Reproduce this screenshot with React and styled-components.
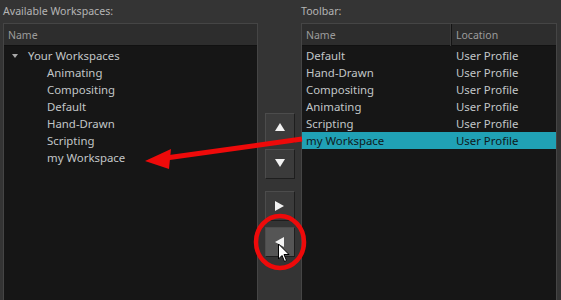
import React from "react";
import styled, { createGlobalStyle } from "styled-components";

const Global = createGlobalStyle`
  html, body { margin: 0; padding: 0; height: 300px; overflow: hidden; background: #343434; }
  #root { height: 300px; }
  * { box-sizing: border-box; }
`;

const Page = styled.div`
  position: relative;
  height: 300px;
  display: flex;
  padding-left: 3px;
  font-family: "Noto Sans", "DejaVu Sans", sans-serif;
  font-size: 11.4px;
`;

const Column = styled.div`
  display: flex;
  flex-direction: column;
  width: ${(p) => p.$w}px;
  height: 100%;
`;

const Label = styled.div`
  height: 23px;
  line-height: 22px;
  font-size: 10.6px;
  color: #b4b4b4;
  white-space: nowrap;
`;

const Panel = styled.div`
  flex: 1;
  background: #161616;
  border: 1px solid #454545;
  border-bottom: none;
  display: flex;
  flex-direction: column;
`;

const Header = styled.div`
  display: grid;
  grid-template-columns: ${(p) => p.$cols};
  height: 22px;
  background: #2d2d2d;
  border-bottom: 1px solid #111;
`;

const HeaderCell = styled.div`
  padding-left: 4px;
  line-height: 22px;
  font-size: 10.5px;
  color: #9c9c9c;
  border-right: ${(p) => (p.$sep ? "1px solid #141414" : "none")};
  box-shadow: ${(p) => (p.$sep ? "inset -1px 0 0 #3a3a3a" : "none")};
`;

const List = styled.div`
  padding-top: 1px;
  display: flex;
  flex-direction: column;
`;

const Row = styled.div`
  display: grid;
  grid-template-columns: ${(p) => p.$cols || "1fr"};
  height: 17px;
  line-height: 17px;
  color: ${(p) => (p.$sel ? "#0f1a1c" : "#c2c6c8")};
  background: ${(p) => (p.$sel ? "#20a1b5" : "transparent")};
  white-space: nowrap;
`;

const Cell = styled.div`
  padding-left: ${(p) => p.$indent || 4}px;
  display: flex;
  align-items: center;
  gap: 10px;
`;

const Caret = styled.span`
  width: 0;
  height: 0;
  border-left: 3.5px solid transparent;
  border-right: 3.5px solid transparent;
  border-top: 4px solid #a8a8a8;
  margin-left: 4px;
`;

const Middle = styled.div`
  width: 43px;
  display: flex;
  flex-direction: column;
  align-items: center;
  padding-top: 113px;
`;

const ArrowButton = styled.div`
  width: 30px;
  height: 30px;
  margin-bottom: ${(p) => p.$mb}px;
  background: ${(p) => (p.$hover ? "#555555" : "#3b3b3b")};
  border-top: 1px solid #4c4c4c;
  border-left: 1px solid #4c4c4c;
  border-right: 1px solid #1e1e1e;
  border-bottom: 1px solid #1e1e1e;
  display: flex;
  align-items: center;
  justify-content: center;
`;

const Tri = ({ dir }) => {
  const pts = {
    up: "0,8 5,0 10,8",
    down: "0,0 10,0 5,8",
    right: "0,0 9,5 0,10",
    left: "9,0 9,10 0,5",
  }[dir];
  return (
    <svg width="10" height="10" viewBox="0 0 10 10">
      <polygon points={pts} fill="#f2f2f2" />
    </svg>
  );
};

const Overlay = styled.svg`
  position: absolute;
  left: 0;
  top: 0;
  pointer-events: none;
`;

const leftItems = ["Animating", "Compositing", "Default", "Hand-Drawn", "Scripting", "my Workspace"];
const rightItems = ["Default", "Hand-Drawn", "Compositing", "Animating", "Scripting", "my Workspace"];

export default function App() {
  return (
    <>
      <Global />
      <Page>
        <Column $w={255}>
          <Label>Available Workspaces:</Label>
          <Panel>
            <Header $cols="1fr">
              <HeaderCell>Name</HeaderCell>
            </Header>
            <List>
              <Row>
                <Cell $indent={4}>
                  <Caret />
                  Your Workspaces
                </Cell>
              </Row>
              {leftItems.map((t) => (
                <Row key={t}>
                  <Cell $indent={43}>{t}</Cell>
                </Row>
              ))}
            </List>
          </Panel>
        </Column>
        <Middle>
          <ArrowButton $mb={6}><Tri dir="up" /></ArrowButton>
          <ArrowButton $mb={12}><Tri dir="down" /></ArrowButton>
          <ArrowButton $mb={6}><Tri dir="right" /></ArrowButton>
          <ArrowButton $hover $mb={0}><Tri dir="left" /></ArrowButton>
        </Middle>
        <Column $w={256}>
          <Label>Toolbar:</Label>
          <Panel>
            <Header $cols="150px 1fr">
              <HeaderCell $sep>Name</HeaderCell>
              <HeaderCell>Location</HeaderCell>
            </Header>
            <List>
              {rightItems.map((t) => (
                <Row key={t} $cols="150px 1fr" $sel={t === "my Workspace"}>
                  <Cell>{t}</Cell>
                  <Cell $indent={4}>User Profile</Cell>
                </Row>
              ))}
            </List>
          </Panel>
        </Column>
        <Overlay width="561" height="300" viewBox="0 0 561 300">
          <line x1="302" y1="139" x2="166" y2="158" stroke="#ee0a0a" strokeWidth="5" />
          <polygon points="145,161 171,149 169,169" fill="#ee0a0a" />
          <ellipse cx="280" cy="242" rx="24" ry="26" fill="none" stroke="#ee0a0a" strokeWidth="4.5" />
          <path
            d="M278.5 244 L278.5 259 L282 255.5 L284.5 261.5 L286.5 260.5 L284 254.5 L289 254.5 Z"
            fill="#ffffff"
            stroke="#000000"
            strokeWidth="1"
            strokeLinejoin="round"
          />
        </Overlay>
      </Page>
    </>
  );
}
